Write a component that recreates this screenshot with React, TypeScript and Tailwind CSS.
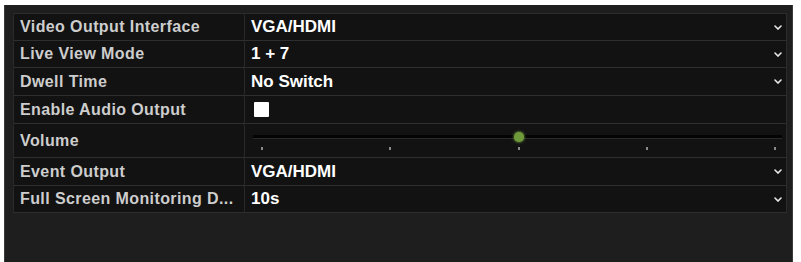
import React from "react";

type Row = {
  label: string;
  kind: "select" | "check" | "slider";
  value?: string;
  h: string;
};

const rows: Row[] = [
  { label: "Video Output Interface", kind: "select", value: "VGA/HDMI", h: "h-[27px]" },
  { label: "Live View Mode", kind: "select", value: "1 + 7", h: "h-[27px]" },
  { label: "Dwell Time", kind: "select", value: "No Switch", h: "h-[28px]" },
  { label: "Enable Audio Output", kind: "check", h: "h-[28px]" },
  { label: "Volume", kind: "slider", h: "h-[34px]" },
  { label: "Event Output", kind: "select", value: "VGA/HDMI", h: "h-[28px]" },
  { label: "Full Screen Monitoring D...", kind: "select", value: "10s", h: "h-[27px]" },
];

function Chevron() {
  return (
    <svg width="8" height="5" viewBox="0 0 8 5" className="shrink-0">
      <path d="M1 1 L4 4 L7 1" fill="none" stroke="#e8e8e8" strokeWidth="1.6" strokeLinecap="round" />
    </svg>
  );
}

function Slider() {
  const ticks = [0, 25, 50, 75, 100];
  return (
    <div className="relative h-full w-full">
      <div className="absolute left-[2px] right-0 top-[11px] h-[4px] bg-[#040404] border-b border-[#2a2a2a]" />
      {ticks.map((t) => (
        <div
          key={t}
          className="absolute top-[23px] h-[3px] w-[2px] bg-[#8a8a8a]"
          style={{ left: `calc(10px + (100% - 18px) * ${t / 100})` }}
        />
      ))}
      <div
        className="absolute top-[8px] h-[10px] w-[10px] rounded-full bg-[#6f9a3a] shadow-[0_0_3px_#8fc050]"
        style={{ left: "calc(10px + (100% - 18px) * 0.5 - 4px)" }}
      />
    </div>
  );
}

export default function App() {
  return (
    <div className="w-[801px] h-[262px] bg-white pt-[5px] pl-[4px] pr-[8px] font-['Liberation_Sans',Arial,sans-serif]">
      <div className="h-full bg-[#1e1e1e] border-l border-r border-[#3a3a3a] pt-[8px] pl-[8px] pr-[5px]">
        <div className="flex flex-col border-t border-[#2c2c2c]">
          {rows.map((r) => (
            <div key={r.label} className={`flex ${r.h} border-b border-[#2e2e2e]`}>
              <div className="w-[232px] shrink-0 flex items-center px-[6px] bg-[#121212] border-x border-[#2a2a2a] rounded-[2px] text-[16px] font-bold tracking-[0.4px] text-[#cdcdcd] whitespace-nowrap overflow-hidden">
                {r.label}
              </div>
              <div className="flex-1 flex items-center pl-[6px] pr-[4px] bg-[#121212] border-r border-[#2a2a2a]">
                {r.kind === "select" && (
                  <>
                    <span className="flex-1 text-[17px] font-bold text-white">{r.value}</span>
                    <Chevron />
                  </>
                )}
                {r.kind === "check" && <div className="ml-[3px] h-[15px] w-[15px] bg-white rounded-[1px]" />}
                {r.kind === "slider" && <Slider />}
              </div>
            </div>
          ))}
        </div>
      </div>
    </div>
  );
}
